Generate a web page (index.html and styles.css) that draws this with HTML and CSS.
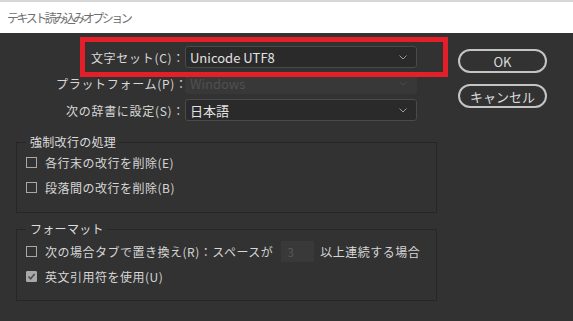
FILE: index.html
```html
<!DOCTYPE html>
<html lang="ja">
<head>
    <meta charset="UTF-8">
    <title>テキスト読み込みオプション</title>
    <link rel="stylesheet" href="styles.css">
</head>
<body>
    <div class="titlebar">テキスト読み込みオプション</div>

    <div class="dialog">
        <div class="main">
            <div class="settings">
                <!-- highlighted row (red annotation box) -->
                <div class="row highlight">
                    <span class="label">文字セット(C)：</span>
                    <div class="select">
                        <span>Unicode UTF8</span>
                        <svg class="chevron" width="8" height="5" viewBox="0 0 8 5"><path d="M0.5 0.5 L4 4 L7.5 0.5" fill="none" stroke="#9a9a9a" stroke-width="1"/></svg>
                    </div>
                </div>
                <div class="row row-platform">
                    <span class="label">プラットフォーム(P)：</span>
                    <div class="select disabled">
                        <span>Windows</span>
                        <svg class="chevron" width="8" height="5" viewBox="0 0 8 5"><path d="M0.5 0.5 L4 4 L7.5 0.5" fill="none" stroke="#4a4a4a" stroke-width="1"/></svg>
                    </div>
                </div>
                <div class="row row-dict">
                    <span class="label">次の辞書に設定(S)：</span>
                    <div class="select">
                        <span>日本語</span>
                        <svg class="chevron" width="8" height="5" viewBox="0 0 8 5"><path d="M0.5 0.5 L4 4 L7.5 0.5" fill="none" stroke="#9a9a9a" stroke-width="1"/></svg>
                    </div>
                </div>
            </div>

            <div class="group group-breaks">
                <div class="group-title">強制改行の処理</div>
                <div class="check-row"><span class="box"></span>各行末の改行を削除(E)</div>
                <div class="check-row"><span class="box"></span>段落間の改行を削除(B)</div>
            </div>

            <div class="group group-format">
                <div class="group-title">フォーマット</div>
                <div class="check-row">
                    <span class="box"></span>次の場合タブで置き換え(R)：スペースが
                    <span class="number">3</span>
                    <span class="after">以上連続する場合</span>
                </div>
                <div class="check-row">
                    <span class="box checked">
                        <svg width="11" height="11" viewBox="0 0 11 11"><path d="M2.5 5.5 L4.6 7.8 L8.6 3" fill="none" stroke="#4c4c4c" stroke-width="1.6"/></svg>
                    </span>英文引用符を使用(U)
                </div>
            </div>
        </div>

        <div class="actions">
            <button class="btn">OK</button>
            <button class="btn">キャンセル</button>
        </div>
    </div>
</body>
</html>
```

FILE: styles.css
```css
body {
    margin: 0;
    background: #323232;
    font-family: "Noto Sans CJK JP", "Noto Sans", sans-serif;
    font-size: 12px;
    color: #d6d6d6;
}

/* Window title */
.titlebar {
    height: 31px;
    line-height: 31px;
    border-top: 2px solid #d6d6d6;
    background: #ffffff;
    padding-left: 7px;
    color: #707070;
    font-size: 12px;
    letter-spacing: -2.5px;
}

.dialog {
    display: flex;
}

.main {
    width: 421px;
    padding-left: 16px;
}

/* Top settings rows */
.settings {
    padding-top: 13px;
    margin-left: 40px;
}

.row {
    display: flex;
    align-items: center;
    height: 22px;
    position: relative;
}

.row-platform {
    margin-top: 4px;
}

.row-dict {
    margin-top: 5px;
}

.label {
    width: 129px;
    text-align: right;
    white-space: nowrap;
    color: #d8d8d8;
    letter-spacing: 0.7px;
}

.select {
    box-sizing: border-box;
    width: 232px;
    height: 22px;
    display: flex;
    align-items: center;
    justify-content: space-between;
    padding: 0 9px 0 4px;
    background: #2a2a2a;
    border: 1px solid #4a4a4a;
    border-radius: 3px;
    font-size: 13px;
    color: #e2e2e2;
}

.select.disabled {
    background: #383838;
    border-color: #383838;
    color: #505050;
}

/* Red annotation frame over the first row */
.highlight::after {
    content: "";
    position: absolute;
    z-index: 2;
    left: 24px;
    top: -9px;
    right: -11px;
    bottom: -9px;
    border: 5px solid #e3202a;
    pointer-events: none;
}

/* Group boxes */
.group {
    margin-top: 21px;
    border: 1px solid #262626;
    padding: 0 0 12px 9px;
}

.group-title {
    display: table;
    margin: -9px 0 0 0;
    padding: 0 3px 0 4px;
    line-height: 16px;
    background: #323232;
    color: #dcdcdc;
    letter-spacing: 0.3px;
}

.group-format {
    margin-top: 16px;
    padding-bottom: 11px;
}

.group-format .group-title {
    margin-bottom: 2px;
}

.check-row {
    display: flex;
    align-items: center;
    height: 25px;
    white-space: nowrap;
    letter-spacing: 0.5px;
}

.box {
    box-sizing: border-box;
    width: 11px;
    height: 11px;
    border: 1px solid #a8a8a8;
    margin-right: 8px;
    flex-shrink: 0;
}

.box.checked {
    background: #a8a8a8;
    border-color: #a8a8a8;
    border-radius: 1px;
}

.box.checked svg {
    display: block;
    margin: -1px;
}

.number {
    box-sizing: border-box;
    width: 33px;
    height: 21px;
    line-height: 21px;
    margin-left: 8px;
    padding-left: 6px;
    background: #393939;
    color: #575757;
}

.after {
    margin-left: 6px;
}

/* Buttons */
.actions {
    display: flex;
    flex-direction: column;
    gap: 11px;
    padding-top: 16px;
    margin-left: 21px;
}

.btn {
    box-sizing: border-box;
    width: 89px;
    height: 24px;
    border: 2px solid #c4c4c4;
    border-radius: 12px;
    background: transparent;
    color: #dcdcdc;
    font-family: "Noto Sans CJK JP", "Noto Sans", sans-serif;
    font-size: 13px;
    padding: 0;
}
```
